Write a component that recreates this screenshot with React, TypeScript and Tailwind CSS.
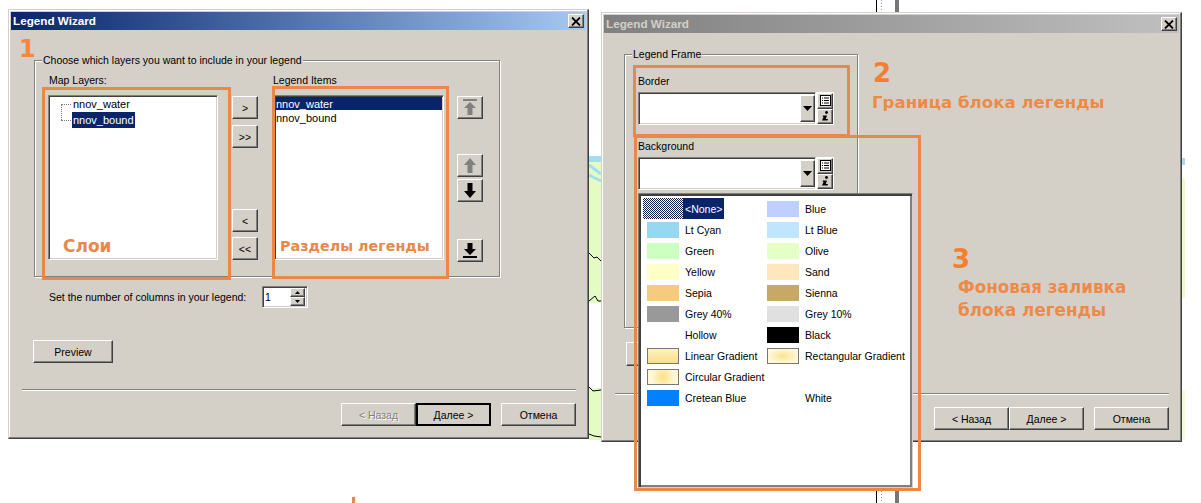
import type { ReactNode } from "react";

const raised =
  "border border-t-white border-l-white border-r-[#404040] border-b-[#404040] shadow-[inset_-1px_-1px_0_#808080] bg-[#d4d0c8]";
const sunken =
  "border border-t-[#808080] border-l-[#808080] border-r-white border-b-white shadow-[inset_1px_1px_0_#404040,inset_-1px_-1px_0_#d4d0c8] bg-white";
const etched =
  "border border-[#808080] shadow-[1px_1px_0_#fff,inset_1px_1px_0_#fff]";

const Btn = ({ children, className = "" }: { children?: ReactNode; className?: string }) => (
  <div className={`${raised} flex items-center justify-center shrink-0 ${className}`}>{children}</div>
);

const CloseIcon = () => (
  <svg width="10" height="9" viewBox="0 0 10 9">
    <path d="M1 0.5 L9 8.5 M9 0.5 L1 8.5" stroke="#000" strokeWidth="1.8" />
  </svg>
);

const ArrowUp = ({ bar = false, on = false }: { bar?: boolean; on?: boolean }) => {
  const c = on ? "#000" : "#808080";
  return (
    <svg width="16" height="17" viewBox="0 0 16 17">
      {bar && <rect x="1" y="0" width="14" height="2" fill={c} />}
      <path d={bar ? "M8 3 L14 9 L10.5 9 L10.5 16 L5.5 16 L5.5 9 L2 9 Z" : "M8 1 L14 8 L10.5 8 L10.5 16 L5.5 16 L5.5 8 L2 8 Z"} fill={c} />
    </svg>
  );
};

const ArrowDown = ({ bar = false }: { bar?: boolean }) => (
  <svg width="16" height="17" viewBox="0 0 16 17">
    <path d={bar ? "M8 13 L14 7 L10.5 7 L10.5 1 L5.5 1 L5.5 7 L2 7 Z" : "M8 16 L14 9 L10.5 9 L10.5 1 L5.5 1 L5.5 9 L2 9 Z"} fill="#000" />
    {bar && <rect x="1" y="14" width="14" height="2" fill="#000" />}
  </svg>
);

const ListIcon = () => (
  <svg width="11" height="11" viewBox="0 0 11 11">
    <rect x="0.5" y="0.5" width="10" height="10" fill="#fff" stroke="#000" />
    <path d="M2 3 H3 M4 3 H9 M2 5.5 H3 M4 5.5 H9 M2 8 H3 M4 8 H9" stroke="#000" />
  </svg>
);

const InfoIcon = () => (
  <svg width="9" height="10" viewBox="0 0 9 10">
    <circle cx="5.5" cy="1.5" r="1.4" fill="#000" />
    <path d="M2 4.5 H6 L4.8 8 H7 L6.5 9.5 H1 L2.6 5.8 H1.6 Z" fill="#000" />
  </svg>
);

const TitleBar = ({ active }: { active: boolean }) => (
  <div
    className={`h-[18px] flex items-center justify-between pl-[2px] pr-[2px] ${
      active ? "bg-gradient-to-r from-[#0a246a] to-[#a6caf0] text-white" : "bg-gradient-to-r from-[#808080] to-[#c0c0c0] text-[#d4d0c8]"
    }`}
  >
    <span className="text-[11.7px] font-bold">Legend Wizard</span>
    <Btn className="w-[16px] h-[14px]">
      <CloseIcon />
    </Btn>
  </div>
);

const Window = ({ className, children, active }: { className: string; children: ReactNode; active: boolean }) => (
  <div
    className={`absolute w-[581px] h-[430px] p-[2px] border border-t-[#d4d0c8] border-l-[#d4d0c8] border-r-[#404040] border-b-[#404040] shadow-[inset_-1px_-1px_0_#808080,inset_1px_1px_0_#fff] bg-[#d4d0c8] ${className}`}
  >
    <TitleBar active={active} />
    {children}
  </div>
);

const Footer = ({ backEnabled, sepTop, rowTop }: { backEnabled: boolean; sepTop: string; rowTop: string }) => (
  <>
    <div className={`${sepTop} ml-[11px] mr-[10px] h-[2px] border-t border-[#808080] border-b-white bg-white`} />
    <div className={`${rowTop} flex justify-end mr-[10px]`}>
      <Btn className={`w-[75px] h-[23px] ${backEnabled ? "" : "text-[#808080] [text-shadow:1px_1px_0_#fff]"}`}>&lt; Назад</Btn>
      {backEnabled ? (
        <Btn className="w-[75px] h-[23px]">Далее &gt;</Btn>
      ) : (
        <div className="w-[75px] h-[23px] flex items-center justify-center border-2 border-black bg-[#d4d0c8]">Далее &gt;</div>
      )}
      <Btn className="w-[75px] h-[23px] ml-[10px]">Отмена</Btn>
    </div>
  </>
);

const Combo = () => (
  <div className="flex items-stretch w-[196px] h-[33px]">
    <div className={`${sunken} flex-1 flex justify-end py-[2px]`}>
      <Btn className="w-[15px] h-full items-center">
        <svg width="9" height="5" viewBox="0 0 9 5">
          <path d="M0 0 H9 L4.5 5 Z" fill="#000" />
        </svg>
      </Btn>
    </div>
    <div className="flex flex-col w-[18px] px-[1px] bg-white py-[1px]">
      <Btn className="flex-1"><ListIcon /></Btn>
      <Btn className="flex-1"><InfoIcon /></Btn>
    </div>
  </div>
);

const colours: { name: string; swatch: string }[][] = [
  [
    { name: "Lt Cyan", swatch: "bg-[#96d8f0]" },
    { name: "Lt Blue", swatch: "bg-[#bfe5ff]" },
  ],
  [
    { name: "Green", swatch: "bg-[#ccffc0]" },
    { name: "Olive", swatch: "bg-[#e5ffc5]" },
  ],
  [
    { name: "Yellow", swatch: "bg-[#ffffc6]" },
    { name: "Sand", swatch: "bg-[#ffe6bd]" },
  ],
  [
    { name: "Sepia", swatch: "bg-[#f6ca80]" },
    { name: "Sienna", swatch: "bg-[#c8a868]" },
  ],
  [
    { name: "Grey 40%", swatch: "bg-[#999999]" },
    { name: "Grey 10%", swatch: "bg-[#e0e0e0]" },
  ],
  [
    { name: "Hollow", swatch: "bg-white" },
    { name: "Black", swatch: "bg-black" },
  ],
  [
    { name: "Linear Gradient", swatch: "border border-[#777] bg-gradient-to-b from-[#fdf3bf] to-[#f9dd8d]" },
    { name: "Rectangular Gradient", swatch: "border border-[#777] bg-[radial-gradient(ellipse_at_center,#fbe38f,#fff9dc_75%)]" },
  ],
  [
    { name: "Circular Gradient", swatch: "border border-[#777] bg-[radial-gradient(circle_at_center,#fbdf80,#fff8d8_70%)]" },
    { name: "", swatch: "bg-white" },
  ],
  [
    { name: "Cretean Blue", swatch: "bg-[#0082ff]" },
    { name: "White", swatch: "bg-white" },
  ],
];

const Swatch = ({ name, swatch }: { name: string; swatch: string }) => (
  <div className="h-[21px] flex items-center gap-[6px] whitespace-nowrap">
    <div className={`w-[32px] h-[16px] shrink-0 ${swatch}`} />
    <span>{name}</span>
  </div>
);

const ColourPopup = () => (
  <div className="absolute left-[638px] top-[193px] w-[275px] h-[295px] border border-t-[#808080] border-l-[#808080] border-r-[#d4d0c8] border-b-[#d4d0c8] bg-white shadow-[inset_2px_2px_0_#404040,inset_-2px_-2px_0_#808080] pl-[8px] pt-[4px]">
    <div className="grid grid-cols-[120px_1fr]">
      <div className="h-[21px] flex items-center -ml-[4px]">
        <div className="w-[40px] h-[21px] bg-[repeating-conic-gradient(#10204f_0_25%,#fff_0_50%)] bg-[length:2px_2px]" />
        <span className="h-[21px] pl-[2px] pr-[2px] flex items-center bg-[#0a246a] text-white">&lt;None&gt;</span>
      </div>
      <Swatch name="Blue" swatch="bg-[#bed0ff]" />
      {colours.flat().map((c, i) => (
        <Swatch key={i} name={c.name} swatch={c.swatch} />
      ))}
    </div>
  </div>
);

const Note = ({ className, children }: { className: string; children: ReactNode }) => (
  <div className={`absolute whitespace-nowrap font-bold [font-family:'DejaVu_Sans',sans-serif] ${className}`}>{children}</div>
);

const Frame = ({ className }: { className: string }) => (
  <div className={`absolute border-[3px] border-[#e8884a] ${className}`} />
);

// what shows of the map window behind the two dialogs
const MapBehind = () => (
  <svg className="absolute left-0 top-0" width="1201" height="503" viewBox="0 0 1201 503">
    <rect x="589" y="156" width="12" height="147" fill="#e4fcc4" />
    <rect x="589" y="388" width="12" height="52" fill="#e4fcc4" />
    <rect x="589" y="156" width="12" height="6" fill="#a4dcf0" />
    <path d="M589 165 L601 174 M589 175 L601 181" stroke="#a4dcf0" strokeWidth="3" />
    <path d="M589 253 L594 258 L597 257 L601 261 M589 301 L595 296 L598 301 L601 301 M589 387 L593 391 L601 390 M589 434 L594 436 L601 437" stroke="#000" fill="none" />
    <rect x="1182" y="158" width="3" height="7" fill="#a4dcf0" />
    <rect x="1182" y="178" width="3" height="120" fill="#eefcc8" />
    <rect x="1182" y="390" width="3" height="50" fill="#f4fcd4" />
    <path d="M876.5 0 V12 M876.5 491 V503" stroke="#000" />
    <path d="M881.5 0 V12 M881.5 491 V503" stroke="#999" strokeDasharray="1 2" />
    <rect x="895" y="0" width="4" height="12" fill="#777" />
    <rect x="895" y="491" width="4" height="12" fill="#777" />
  </svg>
);

export default function App() {
  return (
    <div className="relative w-[1201px] h-[503px] overflow-hidden bg-white text-[10.5px] leading-[14px] text-black [font-family:'Liberation_Sans',sans-serif]">
      <MapBehind />

      <Window active className="left-[8px] top-[9px]">
        <fieldset className={`${etched} ml-[23px] mt-[23px] w-[466px] h-[224px] pl-[13px] pr-0`}>
          <legend className="-ml-[6px] px-[1px] bg-[#d4d0c8]">Choose which layers you want to include in your legend</legend>
          <div className="flex mt-[6px]">
            <div className="w-[170px] shrink-0">
              <div className="h-[14px] mb-[8px] pl-[1px]">Map Layers:</div>
              <div className={`${sunken} h-[165px] pl-[12px] text-[11px]`}>
                <div className="relative pl-[11px]">
                  <div className="absolute left-0 top-[8px] w-[10px] h-[16px] border-l border-t border-dotted border-[#808080]" />
                  <div className="absolute left-0 top-[24px] w-[10px] border-t border-dotted border-[#808080]" />
                  <div className="h-[16px] flex items-center pl-[1px]">nnov_water</div>
                  <div className="h-[16px] flex items-center w-[63px] pl-[1px] bg-[#0a246a] text-white">nnov_bound</div>
                </div>
              </div>
            </div>
            <div className="ml-[14px] pt-[23px] w-[26px] shrink-0 flex flex-col">
              <Btn className="w-[26px] h-[23px]">&gt;</Btn>
              <Btn className="w-[26px] h-[23px] mt-[6px]">&gt;&gt;</Btn>
              <Btn className="w-[26px] h-[23px] mt-[61px]">&lt;</Btn>
              <Btn className="w-[26px] h-[23px] mt-[5px]">&lt;&lt;</Btn>
            </div>
            <div className="ml-[16px] w-[170px] shrink-0">
              <div className="h-[14px] mb-[8px] -ml-[1px]">Legend Items</div>
              <div className={`${sunken} h-[165px] px-[1px] py-[1px] text-[11px]`}>
                <div className="h-[13px] flex items-center bg-[#0a246a] text-white">nnov_water</div>
                <div className="h-[13px] mt-[1px] flex items-center">nnov_bound</div>
              </div>
            </div>
            <div className="ml-[13px] pt-[23px] w-[26px] shrink-0 flex flex-col">
              <Btn className="w-[26px] h-[23px]"><ArrowUp bar /></Btn>
              <Btn className="w-[26px] h-[23px] mt-[35px]"><ArrowUp /></Btn>
              <Btn className="w-[26px] h-[23px] mt-[2px]"><ArrowDown /></Btn>
              <Btn className="w-[26px] h-[23px] mt-[37px]"><ArrowDown bar /></Btn>
            </div>
          </div>
        </fieldset>

        <div className="flex items-center ml-[38px] mt-[9px] h-[22px]">
          <span className="w-[213px]">Set the number of columns in your legend:</span>
          <div className={`${sunken} w-[46px] h-[22px] flex items-center justify-between pl-[2px] pr-[2px]`}>
            <span>1</span>
            <div className="flex flex-col w-[15px] h-[18px]">
              <Btn className="flex-1">
                <svg width="5" height="3" viewBox="0 0 5 3"><path d="M2.5 0 L5 3 H0 Z" fill="#000" /></svg>
              </Btn>
              <Btn className="flex-1">
                <svg width="5" height="3" viewBox="0 0 5 3"><path d="M0 0 H5 L2.5 3 Z" fill="#000" /></svg>
              </Btn>
            </div>
          </div>
        </div>

        <Btn className="w-[80px] h-[23px] ml-[22px] mt-[32px]">Preview</Btn>
        <Footer backEnabled={false} sepTop="mt-[26px]" rowTop="mt-[12px]" />
      </Window>

      <Window active={false} className="left-[601px] top-[12px]">
        <fieldset className={`${etched} ml-[20px] mt-[14px] w-[234px] h-[281px] pl-[13px] pr-0`}>
          <legend className="-ml-[6px] px-[1px] bg-[#d4d0c8]">Legend Frame</legend>
          <div className="h-[14px] mt-[13px] mb-[4px]">Border</div>
          <Combo />
          <div className="h-[14px] mt-[14px] mb-[4px]">Background</div>
          <Combo />
        </fieldset>
        <Btn className="w-[80px] h-[24px] ml-[22px] mt-[14px]">Preview</Btn>
        <Footer backEnabled sepTop="mt-[27px]" rowTop="mt-[12px]" />
      </Window>

      <ColourPopup />

      <Frame className="left-[42px] top-[87px] w-[189px] h-[193px]" />
      <Frame className="left-[272px] top-[86px] w-[177px] h-[193px]" />
      <Frame className="left-[633px] top-[65px] w-[217px] h-[72px]" />
      <Frame className="left-[634px] top-[135px] w-[287px] h-[356px]" />
      <div className="absolute left-[352px] top-[497px] w-[3px] h-[6px] bg-[#e8884a]" />

      <Note className="left-[19px] top-[35px] text-[24px] leading-[28px] text-[#f5873c]">1</Note>
      <Note className="left-[63px] top-[236px] text-[17px] leading-[20px] text-[#e8884a]">Слои</Note>
      <Note className="left-[280px] top-[236px] text-[14.3px] leading-[20px] text-[#e8884a]">Разделы легенды</Note>
      <Note className="left-[873px] top-[58px] text-[26px] leading-[30px] text-[#f57f30]">2</Note>
      <Note className="left-[872px] top-[93px] text-[16.6px] leading-[20px] text-[#ee8a48]">Граница блока легенды</Note>
      <Note className="left-[952px] top-[244px] text-[26px] leading-[30px] text-[#f57f30]">3</Note>
      <Note className="left-[958px] top-[276px] text-[16.8px] leading-[23px] text-[#ee8a48]">
        Фоновая заливка
        <br />
        блока легенды
      </Note>
    </div>
  );
}
